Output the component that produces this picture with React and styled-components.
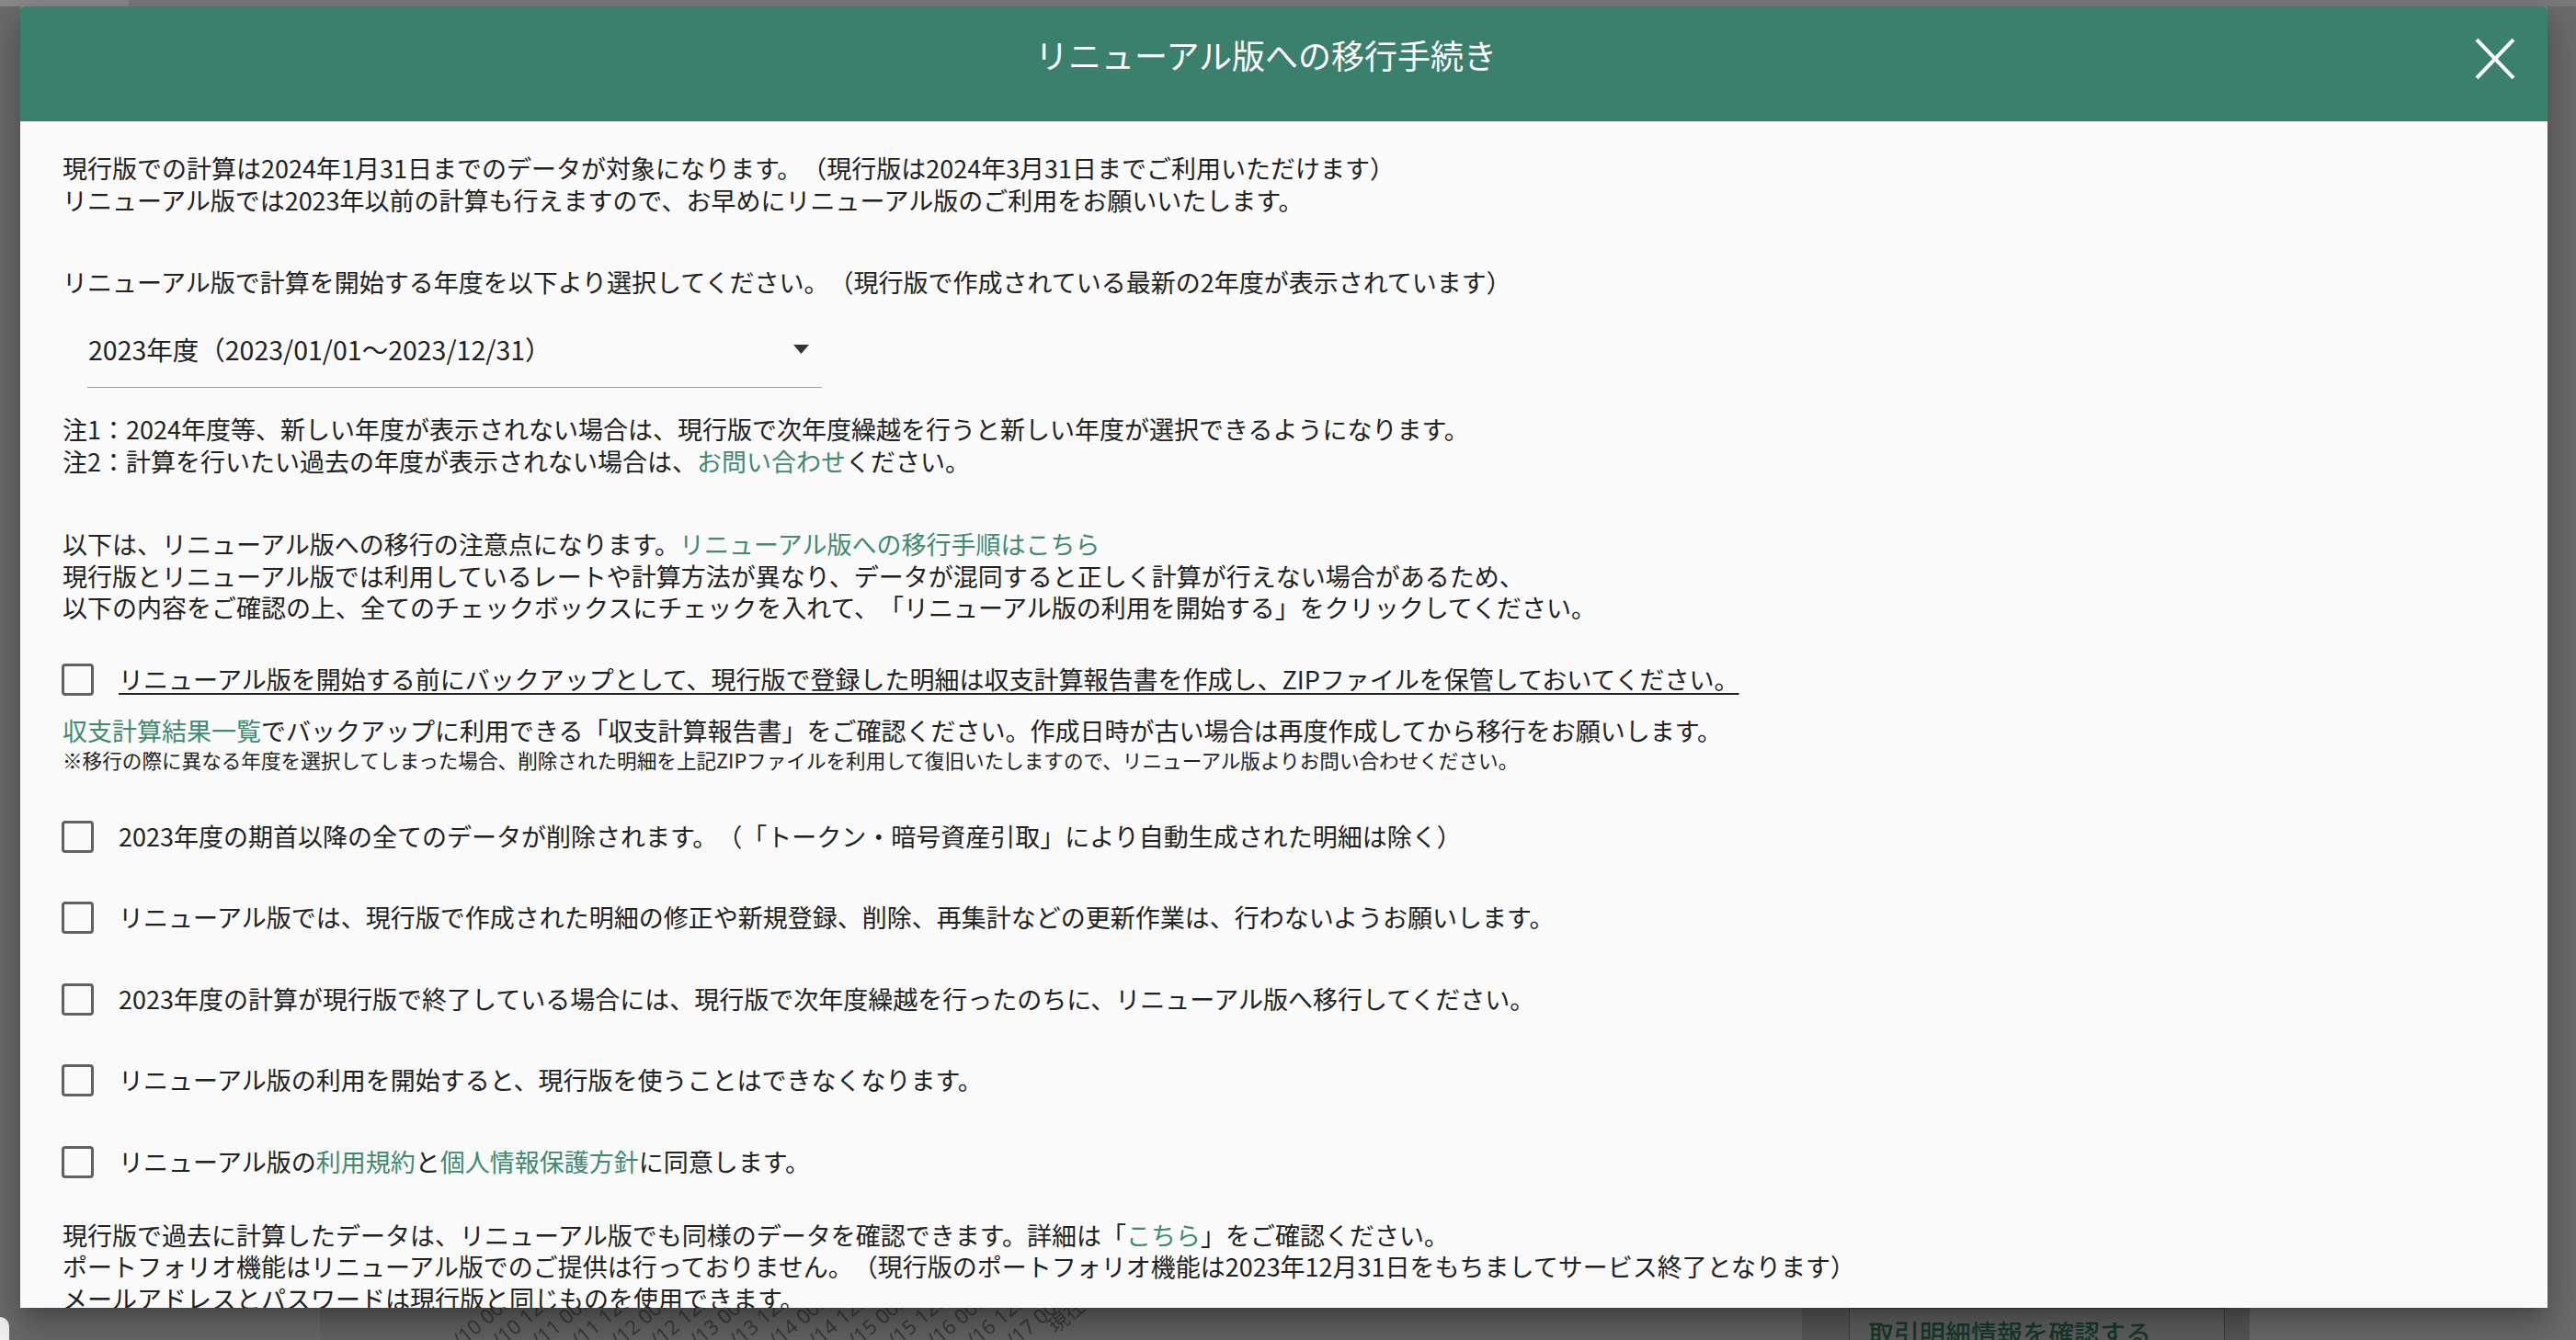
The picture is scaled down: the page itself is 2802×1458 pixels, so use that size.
import React from 'react';
import styled, { createGlobalStyle } from 'styled-components';

const colors = {
  green: '#3b806d',
  link: '#3f8a71',
  text: '#212121',
  paper: '#fafafa',
  box: '#616161',
  rule: '#9e9e9e',
};

const GlobalStyle = createGlobalStyle`
  html, body {
    margin: 0;
    padding: 0;
  }
  body {
    font-family: "Noto Sans CJK JP", "Noto Sans", sans-serif;
    text-spacing-trim: space-all;
  }
`;

/* page behind the dimmed overlay */
const Screen = styled.div`
  position: relative;
  width: 2802px;
  height: 1458px;
  overflow: hidden;
  display: flex;
  flex-direction: column;
  background: #6e6e6e;
`;

const TopStrip = styled.div`
  display: flex;
  height: 7px;
  background: #7a7a7a;
`;

const TopTab = styled.div`
  width: 140px;
  background: #898989;
`;

const Behind = styled.div`
  flex: 1;
  display: flex;
`;

const SideColumn = styled.div`
  width: 348px;
  display: flex;
  flex-direction: column;
  justify-content: flex-end;
  background: #6b6b6b;
`;

const CardEdge = styled.div`
  width: 10px;
  height: 25px;
  background: #f2f2f2;
  border-top-right-radius: 10px;
`;

const ChartColumn = styled.div`
  width: 1612px;
  display: flex;
  align-items: flex-end;
  background: linear-gradient(to bottom, #5c5c5c 94%, #666 100%);
`;

const ActionColumn = styled.div`
  width: 487px;
  box-sizing: border-box;
  padding-left: 51px;
  display: flex;
  align-items: flex-end;
  background: #585858;
`;

const GhostButton = styled.div`
  width: 409px;
  height: 60px;
  box-sizing: border-box;
  margin-bottom: -25px;
  padding: 9px 0 0 20px;
  border: 1px solid #3c3c3c;
  background: #606060;
  color: #173a2d;
  font-size: 28px;
  font-weight: 500;
  line-height: 34px;
`;

const RightColumn = styled.div`
  flex: 1;
  background: #6c6c6c;
`;

/* dialog */
const Dialog = styled.section`
  position: absolute;
  left: 22px;
  top: 7px;
  width: 2749px;
  height: 1416px;
  display: flex;
  flex-direction: column;
  overflow: hidden;
  background: ${colors.paper};
  border-radius: 4px 4px 0 0;
  box-shadow: 0 11px 15px -7px rgba(0, 0, 0, 0.2), 0 24px 38px 3px rgba(0, 0, 0, 0.14),
    0 9px 46px 8px rgba(0, 0, 0, 0.12);
`;

const DialogHeader = styled.header`
  flex: none;
  height: 125px;
  box-sizing: border-box;
  padding: 0 35px 12px 40px;
  display: flex;
  align-items: center;
  background: ${colors.green};
`;

const DialogTitle = styled.h2`
  flex: 1;
  margin: 0 0 10px;
  text-align: center;
  color: #fff;
  font-size: 36px;
  font-weight: 400;
  line-height: 1;
`;

const CloseButton = styled.button`
  width: 44px;
  height: 44px;
  padding: 0;
  border: 0;
  background: none;
  display: flex;
  cursor: pointer;
`;

const DialogBody = styled.div`
  padding: 34px 46px 0;
  color: ${colors.text};
  font-size: 27px;
  line-height: 34.5px;
`;

const Para = styled.p`
  margin: ${p => p.$gap || 0}px 0 0;
`;

const Small = styled.p`
  margin: 0;
  font-size: 21.6px;
  line-height: 28px;
`;

const Link = styled.a`
  color: ${colors.link};
  text-decoration: none;
  cursor: pointer;
`;

const YearSelect = styled.div`
  width: 799px;
  box-sizing: border-box;
  margin: 38px 0 0 27px;
  padding: 0 14px 24px 1px;
  display: flex;
  align-items: center;
  justify-content: space-between;
  border-bottom: 1px solid ${colors.rule};
  font-size: 28.5px;
`;

const CheckRow = styled.label`
  margin-top: ${p => p.$gap}px;
  display: flex;
  align-items: center;
  gap: 27px;
  min-height: 35px;
`;

const CheckBox = styled.span`
  flex: none;
  width: 35px;
  height: 35px;
  box-sizing: border-box;
  margin-left: -1px;
  border: 3px solid ${colors.box};
  border-radius: 4px;
`;

const CheckText = styled.span`
  text-decoration: ${p => (p.$underline ? 'underline' : 'none')};
  text-decoration-thickness: 2px;
  text-underline-offset: 4px;
`;

// x-axis ticks of the price chart behind the dialog
const ticks = Array.from({ length: 15 }, (_, i) => {
  const day = 10 + Math.floor(i / 2);
  return `01/${day} ${i % 2 ? '12:00' : '00:00'}`;
});

function AxisLabels() {
  return (
    <svg width="1612" height="120" viewBox="0 0 1612 120">
      {ticks.map((t, i) => {
        const x = 225 + i * 43;
        return (
          <text
            key={t}
            x={x}
            y={68}
            fontSize="22"
            fill="#3c3c3c"
            textAnchor="end"
            fontFamily="Noto Sans, sans-serif"
            transform={`rotate(-40 ${x} 68)`}
          >
            {t}
          </text>
        );
      })}
      <text
        x={800}
        y={114}
        fontSize="22"
        fill="#3c3c3c"
        fontFamily="Noto Sans CJK JP, sans-serif"
        transform="rotate(-40 800 114)"
      >
        現在
      </text>
    </svg>
  );
}

const checks = [
  { gap: 52, body: '2023年度の期首以降の全てのデータが削除されます。（「トークン・暗号資産引取」により自動生成された明細は除く）' },
  { gap: 53.5, body: 'リニューアル版では、現行版で作成された明細の修正や新規登録、削除、再集計などの更新作業は、行わないようお願いします。' },
  { gap: 53.5, body: '2023年度の計算が現行版で終了している場合には、現行版で次年度繰越を行ったのちに、リニューアル版へ移行してください。' },
  { gap: 53.5, body: 'リニューアル版の利用を開始すると、現行版を使うことはできなくなります。' },
  {
    gap: 53.5,
    body: (
      <>
        リニューアル版の<Link>利用規約</Link>と<Link>個人情報保護方針</Link>に同意します。
      </>
    ),
  },
];

export default function App() {
  return (
    <>
      <GlobalStyle />
      <Screen>
        <TopStrip>
          <TopTab />
        </TopStrip>
        <Behind>
          <SideColumn>
            <CardEdge />
          </SideColumn>
          <ChartColumn>
            <AxisLabels />
          </ChartColumn>
          <ActionColumn>
            <GhostButton>取引明細情報を確認する</GhostButton>
          </ActionColumn>
          <RightColumn />
        </Behind>

        <Dialog>
          <DialogHeader>
            <DialogTitle>リニューアル版への移行手続き</DialogTitle>
            <CloseButton type="button" title="閉じる">
              <svg width="44" height="44" viewBox="0 0 44 44">
                <path d="M2 1 L42 43 M42 1 L2 43" stroke="#fff" strokeWidth="4" fill="none" />
              </svg>
            </CloseButton>
          </DialogHeader>

          <DialogBody>
            <Para>
              現行版での計算は2024年1月31日までのデータが対象になります。（現行版は2024年3月31日までご利用いただけます）
              <br />
              リニューアル版では2023年以前の計算も行えますので、お早めにリニューアル版のご利用をお願いいたします。
            </Para>
            <Para $gap={55}>
              リニューアル版で計算を開始する年度を以下より選択してください。（現行版で作成されている最新の2年度が表示されています）
            </Para>
            <YearSelect>
              <span>2023年度（2023/01/01〜2023/12/31）</span>
              <svg width="17" height="10" viewBox="0 0 17 10">
                <path d="M0 0 H17 L8.5 10 Z" fill="#333" />
              </svg>
            </YearSelect>
            <Para $gap={28}>
              注1：2024年度等、新しい年度が表示されない場合は、現行版で次年度繰越を行うと新しい年度が選択できるようになります。
              <br />
              注2：計算を行いたい過去の年度が表示されない場合は、<Link>お問い合わせ</Link>ください。
            </Para>
            <Para $gap={56}>
              以下は、リニューアル版への移行の注意点になります。<Link>リニューアル版への移行手順はこちら</Link>
              <br />
              現行版とリニューアル版では利用しているレートや計算方法が異なり、データが混同すると正しく計算が行えない場合があるため、
              <br />
              以下の内容をご確認の上、全てのチェックボックスにチェックを入れて、「リニューアル版の利用を開始する」をクリックしてください。
            </Para>

            <CheckRow $gap={43.5}>
              <CheckBox />
              <CheckText $underline>
                リニューアル版を開始する前にバックアップとして、現行版で登録した明細は収支計算報告書を作成し、ZIPファイルを保管しておいてください。
              </CheckText>
            </CheckRow>
            <Para $gap={21}>
              <Link>収支計算結果一覧</Link>
              でバックアップに利用できる「収支計算報告書」をご確認ください。作成日時が古い場合は再度作成してから移行をお願いします。
            </Para>
            <Small>
              ※移行の際に異なる年度を選択してしまった場合、削除された明細を上記ZIPファイルを利用して復旧いたしますので、リニューアル版よりお問い合わせください。
            </Small>

            {checks.map((c, i) => (
              <CheckRow key={i} $gap={c.gap}>
                <CheckBox />
                <CheckText>{c.body}</CheckText>
              </CheckRow>
            ))}

            <Para $gap={45}>
              現行版で過去に計算したデータは、リニューアル版でも同様のデータを確認できます。詳細は「<Link>こちら</Link>」をご確認ください。
              <br />
              ポートフォリオ機能はリニューアル版でのご提供は行っておりません。（現行版のポートフォリオ機能は2023年12月31日をもちましてサービス終了となります）
              <br />
              メールアドレスとパスワードは現行版と同じものを使用できます。
            </Para>
          </DialogBody>
        </Dialog>
      </Screen>
    </>
  );
}
